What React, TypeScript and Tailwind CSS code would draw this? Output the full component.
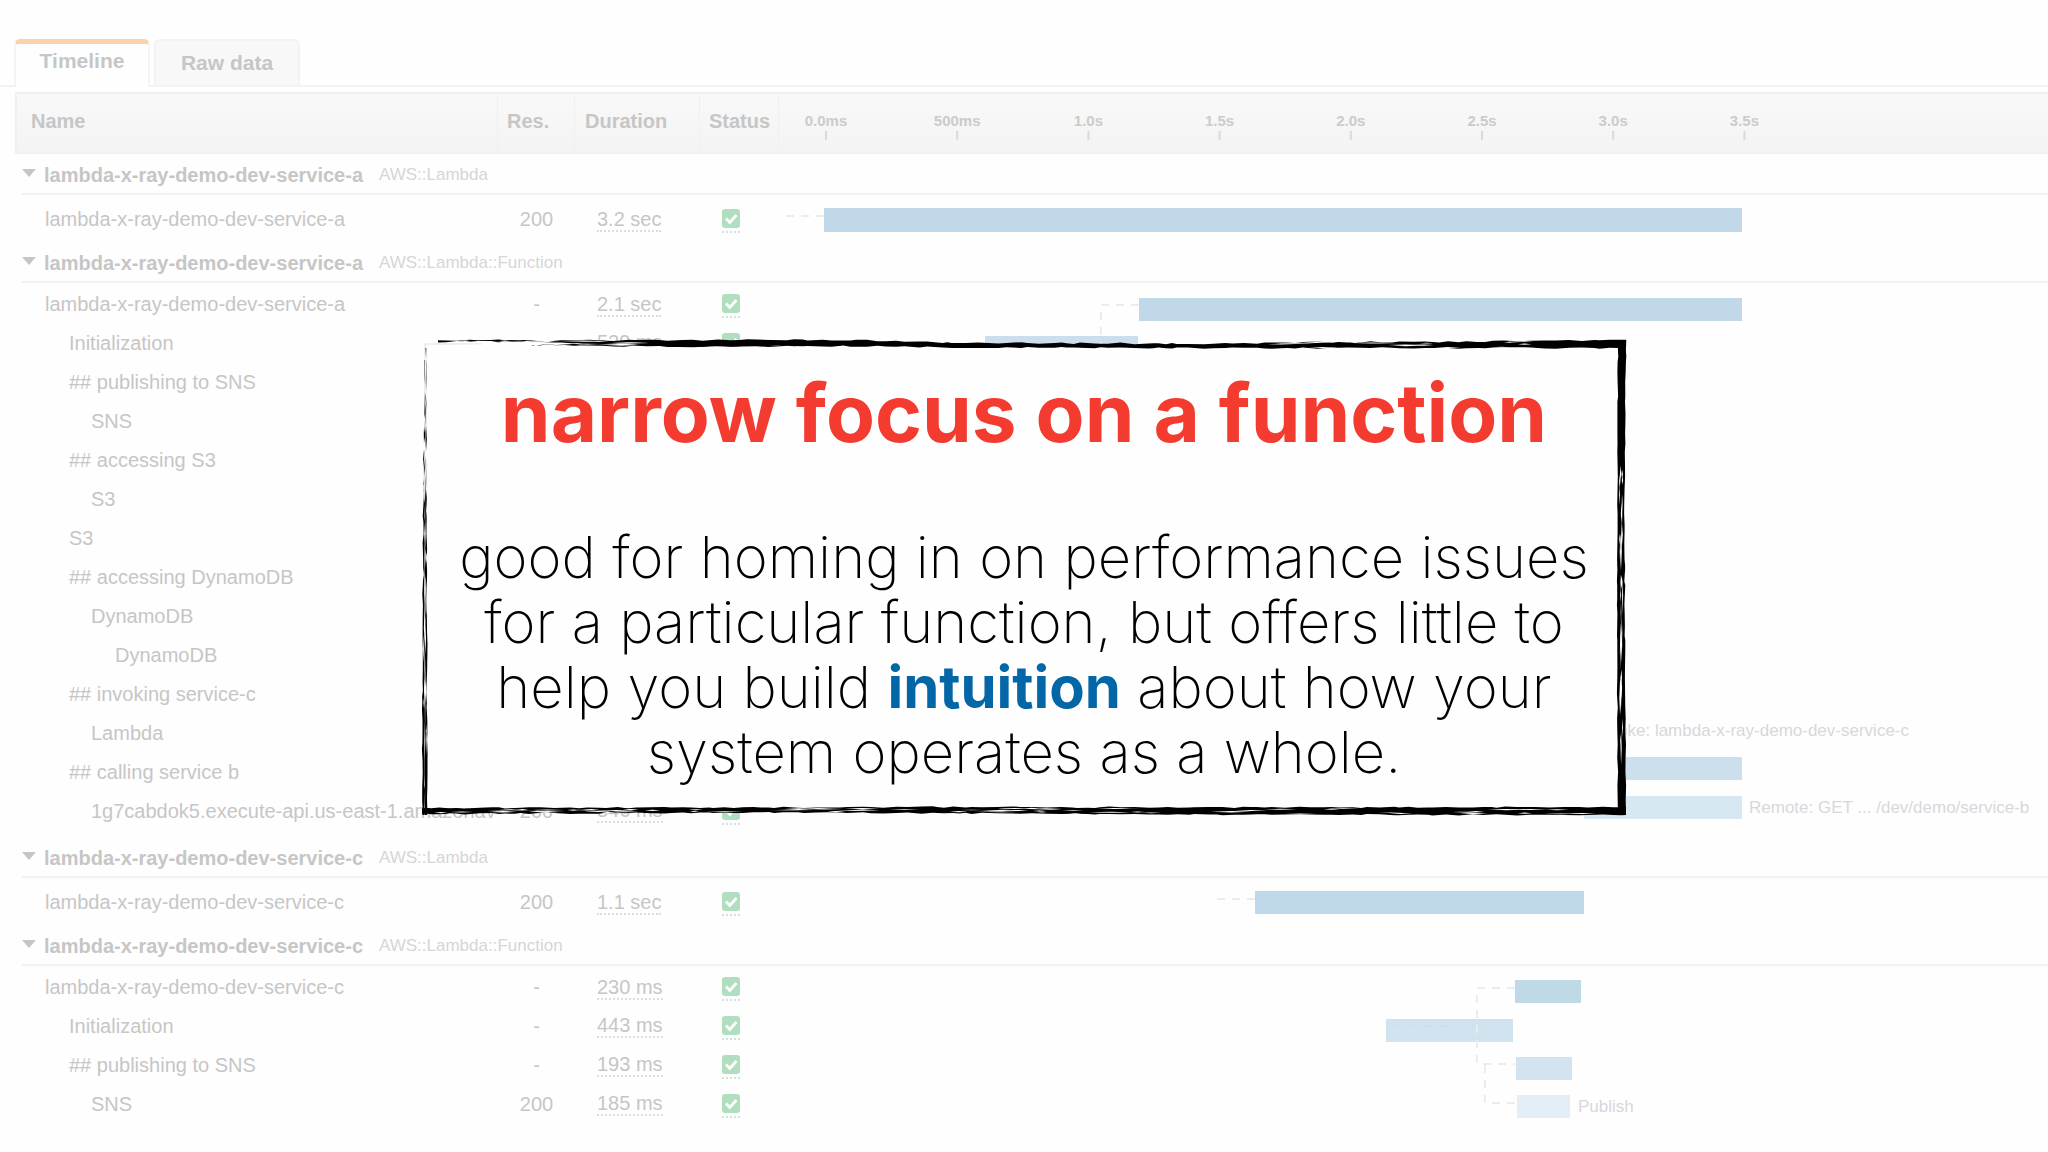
type Row = {
  name: string;
  level: number;
  res?: string;
  duration?: string;
};

type Group = {
  name: string;
  type: string;
  rows: Row[];
};

const groups: Group[] = [
  {
    name: 'lambda-x-ray-demo-dev-service-a',
    type: 'AWS::Lambda',
    rows: [{ name: 'lambda-x-ray-demo-dev-service-a', level: 0, res: '200', duration: '3.2 sec' }],
  },
  {
    name: 'lambda-x-ray-demo-dev-service-a',
    type: 'AWS::Lambda::Function',
    rows: [
      { name: 'lambda-x-ray-demo-dev-service-a', level: 0, res: '-', duration: '2.1 sec' },
      { name: 'Initialization', level: 1, duration: '529 ms' },
      { name: '## publishing to SNS', level: 1 },
      { name: 'SNS', level: 2 },
      { name: '## accessing S3', level: 1 },
      { name: 'S3', level: 2 },
      { name: 'S3', level: 1 },
      { name: '## accessing DynamoDB', level: 1 },
      { name: 'DynamoDB', level: 2 },
      { name: 'DynamoDB', level: 3 },
      { name: '## invoking service-c', level: 1 },
      { name: 'Lambda', level: 2 },
      { name: '## calling service b', level: 1 },
      { name: '1g7cabdok5.execute-api.us-east-1.amazonav', level: 2, res: '200', duration: '546 ms' },
    ],
  },
  {
    name: 'lambda-x-ray-demo-dev-service-c',
    type: 'AWS::Lambda',
    rows: [{ name: 'lambda-x-ray-demo-dev-service-c', level: 0, res: '200', duration: '1.1 sec' }],
  },
  {
    name: 'lambda-x-ray-demo-dev-service-c',
    type: 'AWS::Lambda::Function',
    rows: [
      { name: 'lambda-x-ray-demo-dev-service-c', level: 0, res: '-', duration: '230 ms' },
      { name: 'Initialization', level: 1, res: '-', duration: '443 ms' },
      { name: '## publishing to SNS', level: 1, res: '-', duration: '193 ms' },
      { name: 'SNS', level: 2, res: '200', duration: '185 ms' },
    ],
  },
];

const indent = ['pl-[30px]', 'pl-[54px]', 'pl-[76px]', 'pl-[100px]'];

const ticks = ['0.0ms', '500ms', '1.0s', '1.5s', '2.0s', '2.5s', '3.0s', '3.5s'];

const bars = [
  { x: 45, y: 54, w: 918, h: 24, fill: '#c0d8e7' },
  { x: 360, y: 144, w: 603, h: 23, fill: '#c1d8e9' },
  { x: 206, y: 182, w: 153, h: 23, fill: '#cbdeee' },
  { x: 820, y: 603, w: 143, h: 23, fill: '#cbdfec' },
  { x: 805, y: 642, w: 158, h: 23, fill: '#d8e8f2' },
  { x: 476, y: 737, w: 329, h: 23, fill: '#bfd9ea' },
  { x: 736, y: 826, w: 66, h: 23, fill: '#bfd9e7' },
  { x: 607, y: 865, w: 127, h: 23, fill: '#d2e3f0' },
  { x: 737, y: 903, w: 56, h: 23, fill: '#d4e3f0' },
  { x: 738, y: 941, w: 53, h: 23, fill: '#e3eef6' },
];

const links = [
  'M45 62H6',
  'M360 151H322V190',
  'M476 745H437',
  'M736 834H698V910H736',
  'M706 911V949H738',
];

function noise(seed: number) {
  let s = seed * 7919;
  return () => {
    s = (s * 16807) % 2147483647;
    return s / 2147483647;
  };
}

// Stops along one side of the frame: position, centre line, half thickness.
type Stop = [number, number, number];

function at(stops: Stop[], t: number): [number, number] {
  for (let i = 1; i < stops.length; i++) {
    const [t0, c0, h0] = stops[i - 1];
    const [t1, c1, h1] = stops[i];
    if (t <= t1) {
      const k = (t - t0) / (t1 - t0);
      return [c0 + (c1 - c0) * k, h0 + (h1 - h0) * k];
    }
  }
  const last = stops[stops.length - 1];
  return [last[1], last[2]];
}

function stroke(stops: Stop[], rough: number, seed: number, vertical: boolean) {
  const rnd = noise(seed);
  const point = (a: number, b: number) => (vertical ? `${b.toFixed(1)} ${a.toFixed(1)}` : `${a.toFixed(1)} ${b.toFixed(1)}`);
  const upper: string[] = [];
  const lower: string[] = [];
  const end = stops[stops.length - 1][0];
  for (let t = stops[0][0]; t < end; t += 4 + rnd() * 12) {
    const [c, h] = at(stops, t);
    upper.push(point(t, c - h + (rnd() - 0.5) * rough));
    lower.unshift(point(t, c + h + (rnd() - 0.5) * rough));
  }
  const [c, h] = at(stops, end);
  upper.push(point(end, c - h), point(end, c + h));
  return `M${upper.concat(lower).join('L')}Z`;
}

function scratches(stops: Stop[], count: number, seed: number, vertical: boolean) {
  const rnd = noise(seed);
  const start = stops[0][0];
  const span = stops[stops.length - 1][0] - start - 42;
  let d = '';
  for (let i = 0; i < count; i++) {
    const t = start + rnd() * span;
    const len = 8 + rnd() * 34;
    const [c, h] = at(stops, t);
    const b = c + (rnd() - 0.5) * 2 * h;
    const w = 0.3 + rnd() * 0.4;
    const pts: [number, number][] = [[t, b], [t + len / 2, b - w], [t + len, b], [t + len / 2, b + w]];
    d += `M${pts.map(([p, q]) => (vertical ? `${q.toFixed(1)} ${p.toFixed(1)}` : `${p.toFixed(1)} ${q.toFixed(1)}`)).join('L')}Z`;
  }
  return d;
}

const topMain: Stop[] = [[16, 1, 0.6], [90, 1, 0.8], [150, 2, 1.5], [240, 3, 3], [440, 3, 3], [520, 5, 2.4], [800, 6, 2.2], [900, 5, 3], [1000, 5, 3], [1204, 4, 4]];
const topThin: Stop[] = [[110, 5, 0], [180, 5, 1], [320, 6, 1], [420, 5, 0]];
const rightMain: Stop[] = [[0, 1200, 4], [160, 1199, 3.4], [300, 1199, 4], [475, 1200, 4]];
const bottomMain: Stop[] = [[0, 471, 3], [300, 470, 2.6], [500, 470, 3], [800, 471, 3.6], [1204, 471, 4]];
const leftOuter: Stop[] = [[20, 3, 0], [120, 2, 0.5], [300, 1.5, 1], [475, 1.5, 1.2]];
const leftInner: Stop[] = [[8, 4, 0], [150, 4, 0.5], [280, 4, 1], [475, 4, 1.2]];

function BrushFrame() {
  return (
    <svg
      aria-hidden="true"
      viewBox="0 0 1204 475"
      preserveAspectRatio="none"
      className="absolute inset-0 w-full h-full overflow-visible"
    >
      <path d="M3 4H1200V468H3Z" fill="#fefefe" />
      <path d="M3 60V4H60" fill="none" stroke="#e0e0e0" strokeWidth="1" />
      <path d={stroke(topMain, 1.6, 71, false)} />
      <path d={stroke(topThin, 1.4, 13, false)} />
      <path d={stroke(rightMain, 1, 29, true)} />
      <path d={stroke(bottomMain, 1.4, 47, false)} />
      <path d={stroke(leftOuter, 1, 83, true)} />
      <path d={stroke(leftInner, 1, 97, true)} />
      <g fill="#fefefe">
        <path d={scratches([[20, 3, 3], [240, 4, 3]], 26, 5, false)} />
        <path d={scratches([[840, 5, 3], [1190, 4, 3]], 18, 11, false)} />
        <path d={scratches([[120, 1199, 2], [460, 1200, 2]], 34, 17, true)} />
        <path d={scratches([[6, 471, 2], [700, 470, 2]], 50, 23, false)} />
        <path d={scratches([[640, 471, 3], [1190, 471, 3]], 24, 37, false)} />
        <path d={scratches([[10, 3, 2], [460, 3, 2]], 30, 31, true)} />
      </g>
    </svg>
  );
}

function StatusCheck() {
  return (
    <span className="inline-flex flex-col border-b-2 border-dotted border-[#cfe3d6] pt-1 pb-[3px] align-middle">
      <svg role="img" aria-label="OK" viewBox="0 0 18 19" className="w-[18px] h-[19px]">
        <rect width="18" height="19" rx="3" fill="#b0debf" />
        <path d="M4 9.5l3.8 4L14.5 6" fill="none" stroke="#fefefe" strokeWidth="2.8" />
      </svg>
    </span>
  );
}

function TraceRow({ row, single }: { row: Row; single: boolean }) {
  const root = row.level === 0;
  const pad = single ? 'pt-2' : root ? 'pt-[2px]' : 'p-0';
  return (
    <tr className={root ? 'h-[40px]' : 'h-[39px]'}>
      <td className={`${pad} ${indent[row.level]} whitespace-nowrap`}>{row.name}</td>
      <td className={`${pad} text-center`}>{row.res}</td>
      <td className={`${pad} pl-[22px]`}>
        {row.duration && (
          <span className="inline-block border-b-2 border-dotted border-[#dcdce2] leading-[22px]">{row.duration}</span>
        )}
      </td>
      <td className={`${pad} pl-[22px]`}>{row.duration && <StatusCheck />}</td>
      <td />
    </tr>
  );
}

function TraceGroup({ group }: { group: Group }) {
  return (
    <tbody>
      <tr className="h-[41px]">
        <th colSpan={5} scope="rowgroup" className="p-0 pl-[7px] text-left font-normal">
          <button type="button" className="flex w-full h-[41px] items-center border-b-2 border-[#f2f1f3] pt-[3px] text-left">
            <svg aria-hidden="true" viewBox="0 0 14 8" className="w-[14px] h-2 mb-1">
              <path d="M0 0H14L7 8Z" fill="#c6c6c6" />
            </svg>
            <span className="ml-2 font-bold">{group.name}</span>
            <span className="ml-4 text-[17px] text-[#d6d5d7]">{group.type}</span>
          </button>
        </th>
      </tr>
      {group.rows.map((row, idx) => (
        <TraceRow key={`${row.name}-${idx}`} row={row} single={group.rows.length === 1} />
      ))}
      <tr className="h-[7px]">
        <td colSpan={5} className="p-0" />
      </tr>
    </tbody>
  );
}

function Axis() {
  return (
    <svg role="img" aria-label="Time scale" className="w-full h-[58px] overflow-visible">
      {ticks.map((tick, idx) => (
        <g key={tick}>
          <text x={47 + idx * 131.2} y="32" textAnchor="middle" fontSize="15" fontWeight="700" fill="#cbcbcb">
            {tick}
          </text>
          <rect x={46 + idx * 131.2} y="37" width="2" height="9" fill="#dadada" />
        </g>
      ))}
    </svg>
  );
}

function Chart() {
  return (
    <svg
      role="img"
      aria-label="Trace timeline"
      className="absolute left-[764px] right-0 top-[62px] h-[980px] pointer-events-none overflow-visible"
    >
      {bars.map((bar) => (
        <rect key={bar.y} x={bar.x} y={bar.y} width={bar.w} height={bar.h} fill={bar.fill} />
      ))}
      {links.map((d) => (
        <path key={d} d={d} fill="none" stroke="#ecebed" strokeWidth="2" strokeDasharray="8 7" />
      ))}
      <path d="M616 872H681" stroke="#c9dbea" strokeDasharray="8 7" />
      <g fontSize="17" fill="#dad6dc">
        <text x="1130" y="582" textAnchor="end">
          Invoke: lambda-x-ray-demo-dev-service-c
        </text>
        <text x="970" y="659">
          Remote: GET ... /dev/demo/service-b
        </text>
        <text x="799" y="958">
          Publish
        </text>
      </g>
    </svg>
  );
}

function Callout() {
  return (
    <div className="absolute inset-x-0 top-[340px] flex justify-center">
      <section className="relative w-[1204px] pt-[28px] pb-[30px] text-center text-black font-[Inter,sans-serif]">
        <BrushFrame />
        <h1 className="relative text-[80px] leading-[90px] font-bold text-[#f33b2f]">narrow focus on a function</h1>
        <p className="relative mt-[67px] text-[58px] leading-[65px] font-extralight">
          good for homing in on performance issues
          <br />
          for a particular function, but offers little to
          <br />
          help you build <strong className="font-bold text-[#0366a6]">intuition</strong> about how your
          <br />
          system operates as a whole.
        </p>
      </section>
    </div>
  );
}

export default function App() {
  return (
    <main className="relative min-h-screen overflow-hidden bg-[#fefefe] pt-[39px] text-[20px] leading-6 text-[#c6c6c6] font-['Liberation_Sans',Arial,sans-serif]">
      <div role="tablist" className="flex h-12 gap-1 border-b-2 border-[#f3f3f3] pl-[14px] text-[21px] font-bold">
        <button
          type="button"
          role="tab"
          aria-selected="true"
          className="-mb-[2px] h-12 w-[136px] rounded-t-md border-x-2 border-t-[5px] border-[#f4f4f4] border-t-[#f8d3ae] bg-[#fefefe] pb-[10px]"
        >
          Timeline
        </button>
        <button
          type="button"
          role="tab"
          aria-selected="false"
          className="h-[46px] w-[146px] rounded-t-md border-2 border-b-0 border-[#f3f3f3] bg-[#f8f8f8]"
        >
          Raw data
        </button>
      </div>

      <div className="relative ml-[15px] mt-[5px]">
        <table className="w-full table-fixed border-separate border-spacing-0">
          <colgroup>
            <col className="w-[483px]" />
            <col className="w-[77px]" />
            <col className="w-[125px]" />
            <col className="w-[79px]" />
            <col />
          </colgroup>
          <thead>
            <tr className="h-[62px] bg-linear-to-b from-[#f9f9f9] to-[#f3f3f3] text-left">
              <th className="border-y-2 border-l-2 border-r border-[#f0f0f0] p-0 pl-[14px] pb-1">Name</th>
              <th className="border-y-2 border-r border-[#f0f0f0] p-0 pl-[9px] pb-1">Res.</th>
              <th className="border-y-2 border-r border-[#f0f0f0] p-0 pl-[10px] pb-1">Duration</th>
              <th className="border-y-2 border-r border-[#f0f0f0] p-0 pl-[9px] pb-1">Status</th>
              <th className="border-y-2 border-[#f0f0f0] p-0 align-top">
                <div className="h-[58px]">
                  <Axis />
                </div>
              </th>
            </tr>
          </thead>
          {groups.map((group, idx) => (
            <TraceGroup key={idx} group={group} />
          ))}
        </table>
        <Chart />
      </div>

      <Callout />
    </main>
  );
}
